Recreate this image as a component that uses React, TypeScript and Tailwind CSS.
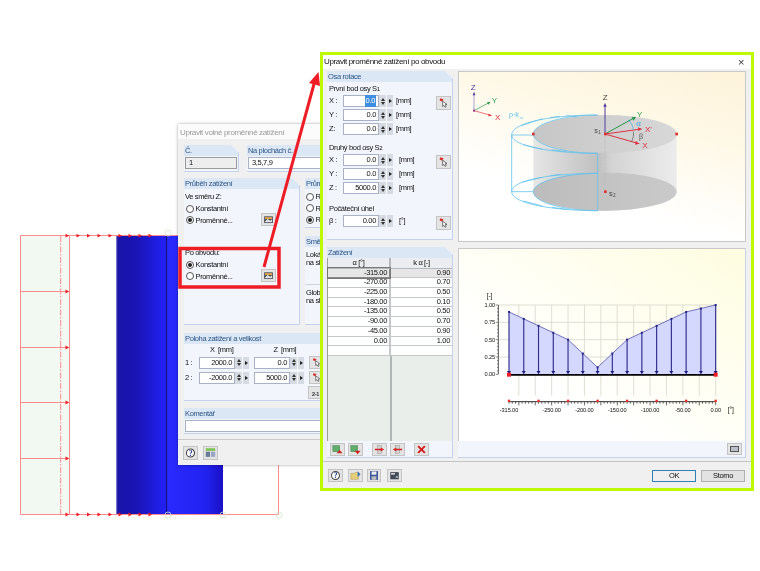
import type { ReactNode } from "react";

const FONT = "font-['Liberation_Sans',Arial,sans-serif] tracking-[-0.35px] blur-[0.3px]";

function PickIcon() {
  return (
    <svg viewBox="0 0 14 14" className="h-full w-full">
      <path d="M3 1.5 L7 2.5 L5.5 5.5 L2.5 4 Z" fill="#d8302f" />
      <path d="M6 5 L6 11 L7.5 9.8 L9 12 L10.2 11.2 L9 9 L11 8.6 Z" fill="#fff" stroke="#333" strokeWidth="0.8" />
    </svg>
  );
}

function PhotoIcon() {
  return (
    <svg viewBox="0 0 14 14" className="h-full w-full">
      <rect x="1.5" y="3" width="11" height="8.5" fill="#3f4654" />
      <rect x="2.5" y="4" width="9" height="2.5" fill="#e2a850" />
      <path d="M2.5 9.5 L6 6.5 L9 8.5 L11.5 7 L11.5 10.5 L2.5 10.5 Z" fill="#e4e4e4" />
    </svg>
  );
}

function SmallBtn({ children, className = "" }: { children: ReactNode; className?: string }) {
  return (
    <div className={`border border-[#c4c4c4] bg-[#e4e4e4] ${className}`}>{children}</div>
  );
}

function Panel({
  title,
  className = "",
  children,
}: {
  title: string;
  className?: string;
  children?: ReactNode;
}) {
  return (
    <div
      className={`flex flex-col overflow-hidden border-r border-b border-[#c6d1ea] bg-[#f2f5fb] [clip-path:polygon(0_0,calc(100%-8px)_0,100%_8px,100%_100%,0_100%)] ${className}`}
    >
      <div className="h-[11px] shrink-0 whitespace-nowrap bg-[#dce7f5] pl-[1px] text-[7.5px] leading-[11px] text-[#2a5585]">
        {title}
      </div>
      {children}
    </div>
  );
}

function Spin({
  value,
  selected,
  width = "w-[50px]",
}: {
  value: string;
  selected?: boolean;
  width?: string;
}) {
  return (
    <div className={`flex h-[12px] shrink-0 ${width}`}>
      <div className="flex flex-1 items-center justify-end border border-[#a9b2c4] bg-white pr-[2px] text-[7.5px] text-[#111]">
        {selected ? <span className="bg-[#3f8fe0] px-[1px] text-white">{value}</span> : value}
      </div>
      <div className="flex w-[7px] flex-col items-center justify-center gap-[1px] bg-[#d5dae3]">
        <div className="h-0 w-0 border-x-[2px] border-b-[3px] border-x-transparent border-b-[#333]" />
        <div className="h-0 w-0 border-x-[2px] border-t-[3px] border-x-transparent border-t-[#333]" />
      </div>
      <div className="flex w-[7px] items-center justify-center border-l border-white bg-[#d5dae3]">
        <div className="h-0 w-0 border-y-[2px] border-l-[3px] border-y-transparent border-l-[#222]" />
      </div>
    </div>
  );
}

function AxisRow({
  label,
  value,
  unit,
  selected,
  pick,
  unitGap = "ml-[3px]",
}: {
  label: string;
  value: string;
  unit: string;
  selected?: boolean;
  pick?: boolean;
  unitGap?: string;
}) {
  return (
    <div className="flex h-[14px] items-center pl-[2px] text-[7.5px] text-[#111]">
      <span className="w-[14px]">{label}</span>
      <Spin value={value} selected={selected} />
      <span className={unitGap}>{unit}</span>
      {pick && (
        <SmallBtn className="mt-[3px] ml-auto mr-[1px] h-[14px] w-[15px]">
          <PickIcon />
        </SmallBtn>
      )}
    </div>
  );
}

function Radio({ on, label }: { on?: boolean; label: string }) {
  return (
    <div className="flex h-[11.5px] items-center gap-[1.5px] whitespace-nowrap text-[7.5px] text-[#111]">
      <div className="flex h-[8px] w-[8px] items-center justify-center rounded-full border border-[#555] bg-white">
        {on && <div className="h-[4px] w-[4px] rounded-full bg-[#222]" />}
      </div>
      {label}
    </div>
  );
}

const LOADS = [
  ["-315.00", "0.90"],
  ["-270.00", "0.70"],
  ["-225.00", "0.50"],
  ["-180.00", "0.10"],
  ["-135.00", "0.50"],
  ["-90.00", "0.70"],
  ["-45.00", "0.90"],
  ["0.00", "1.00"],
  ["", ""],
];

function ToolIcon({ kind }: { kind: string }) {
  if (kind === "x") {
    return (
      <svg viewBox="0 0 15 13" className="h-full w-full">
        <path d="M3.5 2.5 L11.5 10.5 M11.5 2.5 L3.5 10.5" stroke="#d42020" strokeWidth="2.4" />
      </svg>
    );
  }
  if (kind === "up" || kind === "down") {
    return (
      <svg viewBox="0 0 15 13" className="h-full w-full">
        <rect x="2" y="2" width="8" height="7" fill="#5fae6c" stroke="#3d7a48" strokeWidth="0.6" />
        <path
          d={kind === "up" ? "M10 7 L13.5 11 L6.5 11 Z" : "M6.5 8 L13.5 8 L10 12 Z"}
          fill="#d42020"
        />
      </svg>
    );
  }
  return (
    <svg viewBox="0 0 15 13" className="h-full w-full">
      <rect x="5" y="2" width="5" height="9" fill="#d4d4d4" stroke="#888" strokeWidth="0.5" />
      <path
        d={kind === "in" ? "M2 5.7 L9 5.7 L9 4 L13 6.5 L9 9 L9 7.3 L2 7.3 Z" : "M13 5.7 L6 5.7 L6 4 L2 6.5 L6 9 L6 7.3 L13 7.3 Z"}
        fill="#d42020"
      />
    </svg>
  );
}

function FooterIcon({ kind }: { kind: string }) {
  if (kind === "help") {
    return (
      <svg viewBox="0 0 15 13" className="h-full w-full">
        <ellipse cx="7.5" cy="6.5" rx="4.7" ry="4.7" fill="#fff" stroke="#444" strokeWidth="1.2" />
        <text x="7.5" y="9.5" textAnchor="middle" fontSize="9" fontWeight="700" fontFamily="Liberation Serif" fill="#23408e">?</text>
      </svg>
    );
  }
  if (kind === "folder") {
    return (
      <svg viewBox="0 0 15 13" className="h-full w-full">
        <path d="M2 4 L6 4 L7 3 L11 3 L11 11 L2 11 Z" fill="#e5cf78" stroke="#a48f3a" strokeWidth="0.5" />
        <path d="M10 1.5 L13.5 5 L10 8.5 Z" fill="#3c72b8" />
      </svg>
    );
  }
  if (kind === "save") {
    return (
      <svg viewBox="0 0 15 13" className="h-full w-full">
        <rect x="2.5" y="1" width="10" height="11" fill="#3e5a9c" />
        <rect x="4.5" y="1.5" width="6" height="4" fill="#eee" />
        <rect x="4.5" y="7.5" width="6" height="4.5" fill="#bbb" />
      </svg>
    );
  }
  return (
    <svg viewBox="0 0 15 13" className="h-full w-full">
      <rect x="2.5" y="2.5" width="10" height="8.5" fill="#414856" />
      <rect x="3.5" y="3.5" width="4.5" height="2" fill="#d7d7d7" />
      <rect x="9" y="7" width="2.5" height="2.5" fill="#9aa4b4" />
    </svg>
  );
}

function ModelDrawing() {
  const tops = [67, 78, 88.5, 99, 110, 120, 130, 140, 150];
  const rows = [291, 347, 402, 458];
  return (
    <svg viewBox="0 0 760 571" className="absolute inset-0 h-[571px] w-[760px]">
      <defs>
        <linearGradient id="blueA" x1="0" x2="1" y1="0" y2="0">
          <stop offset="0" stopColor="#1a14a8" />
          <stop offset="0.4" stopColor="#1914b4" />
          <stop offset="1" stopColor="#2222f8" />
        </linearGradient>
        <linearGradient id="blueB" x1="0" x2="1" y1="0" y2="0">
          <stop offset="0" stopColor="#2a2aff" />
          <stop offset="0.7" stopColor="#2222f0" />
          <stop offset="1" stopColor="#1a10c4" />
        </linearGradient>
      </defs>
      <rect x="20" y="235" width="49.5" height="279.5" fill="#f2f8f2" />
      <rect x="116.5" y="235.5" width="50" height="279" fill="url(#blueA)" />
      <rect x="166.5" y="235.5" width="56.5" height="279" fill="url(#blueB)" />
      <path d="M166.5 235.5 L166.5 514.5" stroke="#16147c" strokeWidth="1.2" />
      <path d="M116.8 235.5 L116.8 514.5" stroke="#6464c4" strokeWidth="0.8" />
      <g stroke="#ff8c8c" fill="none" strokeWidth="1">
        <path d="M20.5 235.5 L300 235.5 M20.5 514.5 L278.5 514.5 L278.5 440 M20.5 235.5 L20.5 514.5 M69.5 235.5 L69.5 514.5" />
        {rows.map((y) => (
          <path key={y} d={`M20.5 ${y}.5 L69.5 ${y}.5`} />
        ))}
        <path d="M60.7 236 L60.7 514" strokeDasharray="6 1.5 1.5 1.5" />
      </g>
      {[
        [168, 515],
        [223, 515],
        [279, 515],
        [168, 233],
      ].map(([x, y]) => (
        <circle key={x + "-" + y} cx={x} cy={y} r="3" fill="none" stroke="#cfe8cf" strokeWidth="0.8" />
      ))}
      <g fill="#ee1c25">
        {tops.map((x) => (
          <g key={x}>
            <path d={`M${x - 1.5} 233.8 L${x + 2} 235.7 L${x - 1.5} 237.6 Z`} />
            <path d={`M${x - 1.5} 512.6 L${x + 2} 514.5 L${x - 1.5} 516.4 Z`} />
          </g>
        ))}
        {rows.map((y) => (
          <path key={y} d={`M65.5 ${y - 1.4} L69 ${y + 0.5} L65.5 ${y + 2.4} Z`} />
        ))}
      </g>
    </svg>
  );
}

function CylinderDrawing() {
  const red = "#e03030";
  const cyan = "#62c3ee";
  return (
    <svg viewBox="12 36 858 507" className="h-[169px] w-[286px]">
      <defs>
        <linearGradient id="side" x1="0" x2="1" y1="0" y2="0">
          <stop offset="0" stopColor="#e6e6e6" />
          <stop offset="0.45" stopColor="#c0c0c0" />
          <stop offset="0.55" stopColor="#d4d4d4" />
          <stop offset="1" stopColor="#ececec" />
        </linearGradient>
        <linearGradient id="capTop" x1="0" x2="1" y1="0" y2="0">
          <stop offset="0" stopColor="#c6c6c6" />
          <stop offset="1" stopColor="#d8d8d8" />
        </linearGradient>
        <linearGradient id="capBottom" x1="0" x2="1" y1="0" y2="0">
          <stop offset="0" stopColor="#bcbcbc" />
          <stop offset="1" stopColor="#cacaca" />
        </linearGradient>
      </defs>
      <path d="M235 222 L235 395 A215 57 0 0 0 665 395 L665 222 Z" fill="url(#side)" />
      <ellipse cx="450" cy="395" rx="215" ry="57" fill="url(#capBottom)" />
      <ellipse cx="450" cy="222" rx="215" ry="57" fill="url(#capTop)" />
      <g fill="none" stroke={cyan} strokeWidth="2.4">
        <path d="M428 165 C300 165 170 185 170 225 C170 260 300 280 428 280" />
        <path d="M428 165 C330 165 235 190 235 222 C235 255 330 280 428 280" />
        <path d="M428 340 C300 340 170 358 170 395 C170 432 300 452 428 452" />
        <path d="M428 340 C330 340 235 365 235 395 C235 428 330 452 428 452" />
        <path d="M170 225 L170 395 M428 280 L428 452 M170 225 L235 225 M170 395 L235 395" />
        <path d="M200 197 L262 176 M205 254 L262 268 M285 173 L315 169 M335 167 L365 171 M290 270 L335 275" />
        <path d="M200 367 L262 352 M205 423 L262 438 M285 347 L320 343 M290 442 L335 448" />
      </g>
      <path d="M450 226 L450 390" stroke="#b0b0b0" strokeWidth="1.5" strokeDasharray="8 3 2 3" />
      <g strokeWidth="3" fill="none">
        <path d="M450 222 L450 135" stroke="#4a3d9c" />
        <path d="M450 222 L535 175" stroke="#23994a" />
        <path d="M450 222 L552 208" stroke="#dd3040" />
        <path d="M450 222 L545 249" stroke="#dd3040" />
        <path d="M520 180 C530 190 535 200 535 210" stroke="#3aa6e6" strokeWidth="2" />
        <path d="M535 215 C537 225 534 235 530 245" stroke="#555" strokeWidth="2" />
        <path d="M57 152 L57 102" stroke="#a7a2d4" />
        <path d="M57 152 L100 129" stroke="#23994a" strokeWidth="2" />
        <path d="M57 152 L104 165" stroke="#dd3040" strokeWidth="2" />
      </g>
      <path d="M450 128 L445 140 L455 140 Z" fill="#4a3d9c" />
      <path d="M543 170 L530 172 L536 182 Z" fill="#23994a" />
      <path d="M562 207 L549 202 L550 213 Z" fill="#dd3040" />
      <path d="M554 251 L542 243 L540 254 Z" fill="#dd3040" />
      <path d="M57 95 L53 106 L61 106 Z" fill="#4a3d9c" />
      <path d="M107 125 L96 127 L100 134 Z" fill="#23994a" />
      <path d="M112 167 L101 161 L100 169 Z" fill="#dd3040" />
      {[
        [235, 222],
        [665, 222],
        [451, 222],
        [451, 395],
      ].map(([x, y]) => (
        <rect key={x + "-" + y} x={x - 4} y={y - 4} width="8" height="8" fill={red} />
      ))}
      <rect x="54" y="149" width="6" height="6" fill="#a03a90" />
      <g fontFamily="Liberation Sans" fontSize="24">
        <text x="47" y="90" fill="#4a3d9c">Z</text>
        <text x="110" y="128" fill="#2fa05a">Y</text>
        <text x="120" y="180" fill="#dd3040">X</text>
        <text x="162" y="172" fill="#5cc0ee" fontSize="22">p·k</text>
        <text x="196" y="176" fill="#5cc0ee" fontSize="13">α</text>
        <text x="443" y="120" fill="#444">Z</text>
        <text x="546" y="172" fill="#2fa05a">Y</text>
        <text x="544" y="197" fill="#3aa6e6">α</text>
        <text x="570" y="216" fill="#dd3040">X'</text>
        <text x="552" y="238" fill="#555" fontFamily="Liberation Serif">β</text>
        <text x="562" y="264" fill="#dd3040">X</text>
        <text x="418" y="218" fill="#444" fontSize="22">s</text>
        <text x="430" y="221" fill="#444" fontSize="14">1</text>
        <text x="462" y="408" fill="#444" fontSize="22">s</text>
        <text x="474" y="411" fill="#444" fontSize="14">2</text>
      </g>
    </svg>
  );
}

function ChartDrawing() {
  const x0 = 162;
  const x1 = 782;
  const yAt = (v: number) => 388 - v * 208;
  const xAt = (deg: number) => x1 + (deg / 315) * (x1 - x0);
  const values = [0.9, 0.8, 0.7, 0.6, 0.5, 0.3, 0.1, 0.3, 0.5, 0.6, 0.7, 0.8, 0.9, 0.95, 1];
  const step = (x1 - x0) / 14;
  const line = values.map((v, i) => `${x0 + i * step},${yAt(v)}`).join(" ");
  const gridDegs = Array.from({ length: 13 }, (_, i) => -300 + i * 25);
  const ticks = Array.from({ length: 64 }, (_, i) => -315 + i * 5);
  const labels: [number, string][] = [
    [-315, "-315.00"],
    [-250, "-250.00"],
    [-200, "-200.00"],
    [-150, "-150.00"],
    [-100, "-100.00"],
    [-50, "-50.00"],
    [0, "0.00"],
  ];
  return (
    <svg viewBox="12 12 858 576" className="h-[192px] w-[286px]">
      <defs>
        <linearGradient id="chartBg" x1="0" x2="1" y1="1" y2="0">
          <stop offset="0.3" stopColor="#ffffff" />
          <stop offset="1" stopColor="#fefde0" />
        </linearGradient>
      </defs>
      <rect x="12" y="12" width="858" height="576" fill="url(#chartBg)" />
      <g stroke="#d8d8ce" strokeWidth="2.5" fill="none">
        {gridDegs.map((d) => (
          <path key={d} d={`M${xAt(d)} 180 L${xAt(d)} 452`} />
        ))}
        {[1, 0.75, 0.5, 0.25].map((v) => (
          <path key={v} d={`M130 ${yAt(v)} L782 ${yAt(v)}`} />
        ))}
      </g>
      <polygon points={`${x0},388 ${line} ${x1},388`} fill="#d5d8fe" />
      <polyline points={line} fill="none" stroke="#5a58ac" strokeWidth="2.5" />
      {values.map((v, i) => {
        const x = x0 + i * step;
        return (
          <g key={i}>
            <path d={`M${x} ${yAt(v)} L${x} 382`} stroke="#30308e" strokeWidth="3.5" />
            <rect x={x - 3} y={yAt(v) - 3} width="6" height="6" fill="#26268a" />
            <path d={`M${x - 6} 378 L${x + 6} 378 L${x} 388 Z`} fill="#1c1c80" />
          </g>
        );
      })}
      <path d={`M${x0} 389.5 L${x1} 389.5`} stroke="#000" strokeWidth="5.5" />
      <rect x={x0 - 6} y="383" width="12" height="12" fill="#ee1c25" />
      <rect x={x1 - 6} y="383" width="12" height="12" fill="#ee1c25" />
      <path d="M130 180 L130 388" stroke="#555" strokeWidth="3" />
      {Array.from({ length: 21 }, (_, i) => (
        <path
          key={i}
          d={`M${i % 5 === 0 ? 122 : 126} ${180 + i * 10.4} L130 ${180 + i * 10.4}`}
          stroke="#555"
          strokeWidth="2"
        />
      ))}
      <path d={`M${x0} 470 L${x1} 470`} stroke="#333" strokeWidth="3" />
      {ticks.map((d) => (
        <path
          key={d}
          d={`M${xAt(d)} 470 L${xAt(d)} ${d % 25 === 0 ? 481 : 476}`}
          stroke="#333"
          strokeWidth="2.2"
        />
      ))}
      {[-315, -270, -225, -180, -135, -90, -45, 0].map((d) => (
        <rect key={d} x={xAt(d) - 3.5} y="464" width="7" height="7" fill="#ee2a2a" />
      ))}
      <g fontFamily="Liberation Sans" fontSize="17" fill="#111">
        {labels.map(([d, t]) => (
          <text key={d} x={xAt(d)} y="501" textAnchor="middle">
            {t}
          </text>
        ))}
        <text x="818" y="501" fontSize="20">[°]</text>
        <text x="95" y="158" fontSize="20">[-]</text>
        {[
          [180, "1.00"],
          [232, "0.75"],
          [284, "0.50"],
          [336, "0.25"],
          [388, "0.00"],
        ].map(([y, t]) => (
          <text key={t} x="120" y={Number(y) + 6} textAnchor="end">
            {t}
          </text>
        ))}
      </g>
    </svg>
  );
}

function BackDialog() {
  return (
    <div className="absolute top-[124px] left-[178px] flex h-[341px] w-[150px] flex-col bg-[#f0f0f0] shadow-[0_0_3px_rgba(0,0,0,0.35)]">
      <div className="h-[15px] shrink-0 bg-[#fbfbfb] pt-[2px] pl-[2px] text-[8px] leading-[13px] whitespace-nowrap text-[#9a9a9a]">
        Upravit volné proměnné zatížení
      </div>
      <div className="flex flex-1 flex-col pl-[6px]">
        <div className="mt-[6px] flex h-[27px] gap-[8px]">
          <Panel title="Č." className="w-[55px]">
            <div className="mx-[1px] mt-[1px] flex h-[12px] items-center border border-[#9a9a9a] bg-[#eeeeee] pl-[3px] text-[7.5px] text-[#111]">
              1
            </div>
          </Panel>
          <Panel title="Na plochách č." className="flex-1">
            <div className="ml-[1px] mt-[1px] flex h-[12px] items-center border border-[#a9b2c4] bg-white pl-[3px] text-[7.5px] text-[#111]">
              3,5,7,9
            </div>
          </Panel>
        </div>

        <div className="mt-[6px] flex h-[147px] gap-[5px]">
          <Panel title="Průběh zatížení" className="w-[116px]">
            <div className="mt-[3px] h-[10px] pl-[1px] text-[7.5px] leading-[10px] text-[#111]">
              Ve směru Z:
            </div>
            <div className="mt-[1px] pl-[2px]">
              <Radio label="Konstantní" />
              <div className="flex items-center">
                <Radio on label="Proměnné..." />
                <SmallBtn className="mt-[-2px] ml-[28px] h-[13px] w-[15px]">
                  <PhotoIcon />
                </SmallBtn>
              </div>
            </div>
            <div className="mt-[22px] h-[10px] pl-[1px] text-[7.5px] leading-[10px] text-[#111]">
              Po obvodu:
            </div>
            <div className="mt-[1px] pl-[2px]">
              <Radio on label="Konstantní" />
              <div className="flex items-center">
                <Radio label="Proměnné..." />
                <SmallBtn className="mt-[-2px] ml-[28px] h-[13px] w-[15px]">
                  <PhotoIcon />
                </SmallBtn>
              </div>
            </div>
          </Panel>
          <div className="flex flex-1 flex-col gap-[8px]">
            <Panel title="Prům" className="h-[50px]">
              <div className="mt-[2px] pl-[1px]">
                <Radio label="R" />
                <Radio label="R" />
                <Radio on label="R" />
              </div>
            </Panel>
            <Panel title="Směr" className="flex-1">
              <div className="mt-[4px] pl-[1px] text-[7.5px] leading-[8px] text-[#111]">
                Lokál
                <br />
                na sk
              </div>
              <div className="mt-[17px] border-t border-[#cfd4dc] pt-[4px] pl-[1px] text-[7.5px] leading-[8px] text-[#111]">
                Globa
                <br />
                na sk
              </div>
            </Panel>
          </div>
        </div>

        <Panel title="Poloha zatížení a velikost" className="mt-[8px] h-[68px]">
          <div className="flex h-[12px] items-center text-[7.5px] text-[#111]">
            <span className="ml-[26px]">X&nbsp;&nbsp;[mm]</span>
            <span className="ml-[40px]">Z&nbsp;&nbsp;[mm]</span>
          </div>
          <div className="flex flex-col gap-[2px] pl-[1px]">
            <div className="flex items-center text-[7.5px] text-[#111]">
              <span className="w-[14px]">1 :</span>
              <Spin value="2000.0" />
              <div className="w-[5px]" />
              <Spin value="0.0" />
              <SmallBtn className="ml-[5px] h-[13px] w-[15px]">
                <PickIcon />
              </SmallBtn>
            </div>
            <div className="flex items-center text-[7.5px] text-[#111]">
              <span className="w-[14px]">2 :</span>
              <Spin value="-2000.0" />
              <div className="w-[5px]" />
              <Spin value="5000.0" />
              <SmallBtn className="ml-[5px] h-[13px] w-[15px]">
                <PickIcon />
              </SmallBtn>
            </div>
          </div>
          <SmallBtn className="mt-[2px] ml-[124px] flex h-[13px] w-[15px] items-end justify-center text-[5.5px] leading-[7px] font-bold text-[#333]">
            2-1
          </SmallBtn>
        </Panel>

        <Panel title="Komentář" className="mt-[7px] h-[26px]">
          <div className="mt-[1px] ml-[1px] h-[12px] border border-[#a9b2c4] bg-white" />
        </Panel>
      </div>
      <div className="mt-[5px] border-t border-[#cccccc]" />
      <div className="flex h-[25px] items-start gap-[5px] pt-[6px] pl-[5px]">
        <SmallBtn className="h-[14px] w-[15px]">
          <FooterIcon kind="help" />
        </SmallBtn>
        <SmallBtn className="h-[14px] w-[15px]">
          <svg viewBox="0 0 15 14" className="h-full w-full">
            <rect x="2" y="1.5" width="11" height="3" fill="#7cc24e" />
            <rect x="2" y="5.5" width="5" height="6" fill="#6a7a9a" />
            <rect x="8" y="5.5" width="5" height="6" fill="#9aa6c8" />
          </svg>
        </SmallBtn>
      </div>
    </div>
  );
}

function RedMarks() {
  return (
    <svg viewBox="0 0 760 571" className="pointer-events-none absolute inset-0 h-[571px] w-[760px]">
      <rect x="180" y="248.5" width="99" height="38.5" fill="none" stroke="#ee1c25" strokeWidth="3.5" />
      <path d="M264 267 L314 84" stroke="#ee1c25" strokeWidth="3" fill="none" />
      <path d="M318.5 72 L309 83 L320 86 Z" fill="#ee1c25" />
    </svg>
  );
}

function FrontDialog() {
  return (
    <div className="absolute top-[52px] left-[320px] flex h-[439px] w-[434px] flex-col border-[3px] border-[#bdf900] bg-[#f0f0f0]">
      <div className="flex h-[14px] shrink-0 items-center justify-between bg-white pr-[7px] pl-[1px] text-[8px] whitespace-nowrap text-[#111]">
        <span>Upravit proměnné zatížení po obvodu</span>
        <span className="text-[11px] leading-none text-[#333]">×</span>
      </div>

      <div className="flex h-[389px] shrink-0 gap-[5px] pt-[2px] pl-[4px]">
        <div className="flex w-[126px] flex-col gap-[7px]">
          <Panel title="Osa rotace" className="h-[170px]">
            <div className="mt-[1px] h-[11px] pl-[2px] text-[7.5px] leading-[11px] text-[#111]">
              První bod osy S<span className="text-[6px]">1</span>
            </div>
            <AxisRow label="X :" value="0.0" unit="[mm]" selected pick />
            <AxisRow label="Y :" value="0.0" unit="[mm]" />
            <AxisRow label="Z:" value="0.0" unit="[mm]" />
            <div className="mt-[7px] h-[10px] pl-[2px] text-[7.5px] leading-[10px] text-[#111]">
              Druhý bod osy S<span className="text-[6px]">2</span>
            </div>
            <AxisRow label="X :" value="0.0" unit="[mm]" unitGap="ml-[6px]" pick />
            <AxisRow label="Y :" value="0.0" unit="[mm]" unitGap="ml-[6px]" />
            <AxisRow label="Z :" value="5000.0" unit="[mm]" unitGap="ml-[6px]" />
            <div className="mt-[8px] h-[11px] pl-[2px] text-[7.5px] leading-[11px] text-[#111]">
              Počáteční úhel
            </div>
            <AxisRow label="β :" value="0.00" unit="[°]" unitGap="ml-[6px]" pick />
          </Panel>

          <Panel title="Zatížení" className="h-[212px]">
            <div className="flex h-[183px] flex-col border-l border-[#9aa09e] bg-[#e9eeeb]">
              <table className="w-full table-fixed border-collapse text-[7.5px] text-[#111]">
                <thead>
                  <tr className="h-[10px] bg-[#ebedf0] text-center font-normal">
                    <th className="border-r-2 border-b border-[#b4b8bc] p-0 leading-[9px] font-normal">α [°]</th>
                    <th className="border-b border-[#b4b8bc] p-0 leading-[9px] font-normal">k α [-]</th>
                  </tr>
                </thead>
                <tbody>
                  {LOADS.map(([a, k], i) => (
                    <tr
                      key={i}
                      className={`h-[9.7px] ${i === 0 ? "bg-[#e6e6e6]" : "bg-white"}`}
                    >
                      <td
                        className={`border-r-2 border-b p-0 pr-[2px] text-right leading-[8.7px] ${
                          i === 0 ? "border-r-[#888] border-b-[#888] outline outline-[#777]" : "border-[#c4c8c8]"
                        }`}
                      >
                        {a}
                      </td>
                      <td className="border-b border-[#c4c8c8] p-0 pr-[2px] text-right leading-[8.7px]">
                        {k}
                      </td>
                    </tr>
                  ))}
                </tbody>
              </table>
              <div className="ml-[62px] flex-1 border-l-2 border-[#b0b6b4]" />
            </div>
            <div className="flex h-[14px] items-center gap-[3px] pt-[2px] pl-[3px]">
              {["up", "down"].map((k) => (
                <SmallBtn key={k} className="h-[13px] w-[15px]">
                  <ToolIcon kind={k} />
                </SmallBtn>
              ))}
              <div className="w-[3px]" />
              {["in", "out"].map((k) => (
                <SmallBtn key={k} className="h-[13px] w-[15px]">
                  <ToolIcon kind={k} />
                </SmallBtn>
              ))}
              <div className="w-[3px]" />
              <SmallBtn className="h-[13px] w-[15px]">
                <ToolIcon kind="x" />
              </SmallBtn>
            </div>
          </Panel>
        </div>

        <div className="flex w-[288px] flex-col gap-[6px]">
          <div className="h-[171px] overflow-hidden border-[1px] border-[#c8c8c8] bg-[linear-gradient(15deg,#ffffff_30%,#fef8e6_70%,#fdf3da)]">
            <CylinderDrawing />
          </div>
          <div className="flex h-[210px] flex-col border-r border-b border-[#c6d1ea] bg-[#f2f5fb]">
            <div className="h-[193px] shrink-0 overflow-hidden border-t border-l border-[#c8c8c8]">
              <ChartDrawing />
            </div>
            <div className="flex flex-1 items-center justify-end pr-[3px]">
              <SmallBtn className="flex h-[12px] w-[15px] items-center justify-center">
                <div className="h-[6px] w-[9px] border border-[#555] bg-[#bbc0c8]" />
              </SmallBtn>
            </div>
          </div>
        </div>
      </div>

      <div className="mt-[3px] border-t border-[#c4c4c4]" />
      <div className="flex flex-1 items-start pt-[7px] pr-[6px] pl-[5px]">
        <SmallBtn className="h-[13px] w-[15px]">
          <FooterIcon kind="help" />
        </SmallBtn>
        <SmallBtn className="ml-[5px] h-[13px] w-[15px]">
          <FooterIcon kind="folder" />
        </SmallBtn>
        <SmallBtn className="ml-[4px] h-[13px] w-[14px]">
          <FooterIcon kind="save" />
        </SmallBtn>
        <SmallBtn className="ml-[6px] h-[13px] w-[15px]">
          <FooterIcon kind="calc" />
        </SmallBtn>
        <div className="ml-auto flex gap-[5px] pt-[1px] text-[7.5px] text-[#111]">
          <div className="flex h-[12px] w-[44px] items-center justify-center border border-[#2f7fb8] bg-[#efefef]">
            OK
          </div>
          <div className="flex h-[12px] w-[44px] items-center justify-center border border-[#b0b0b0] bg-[#e2e2e2]">
            Storno
          </div>
        </div>
      </div>
    </div>
  );
}

export default function App() {
  return (
    <div className={`relative h-[571px] w-[760px] overflow-hidden bg-white ${FONT}`}>
      <ModelDrawing />
      <BackDialog />
      <RedMarks />
      <FrontDialog />
    </div>
  );
}
